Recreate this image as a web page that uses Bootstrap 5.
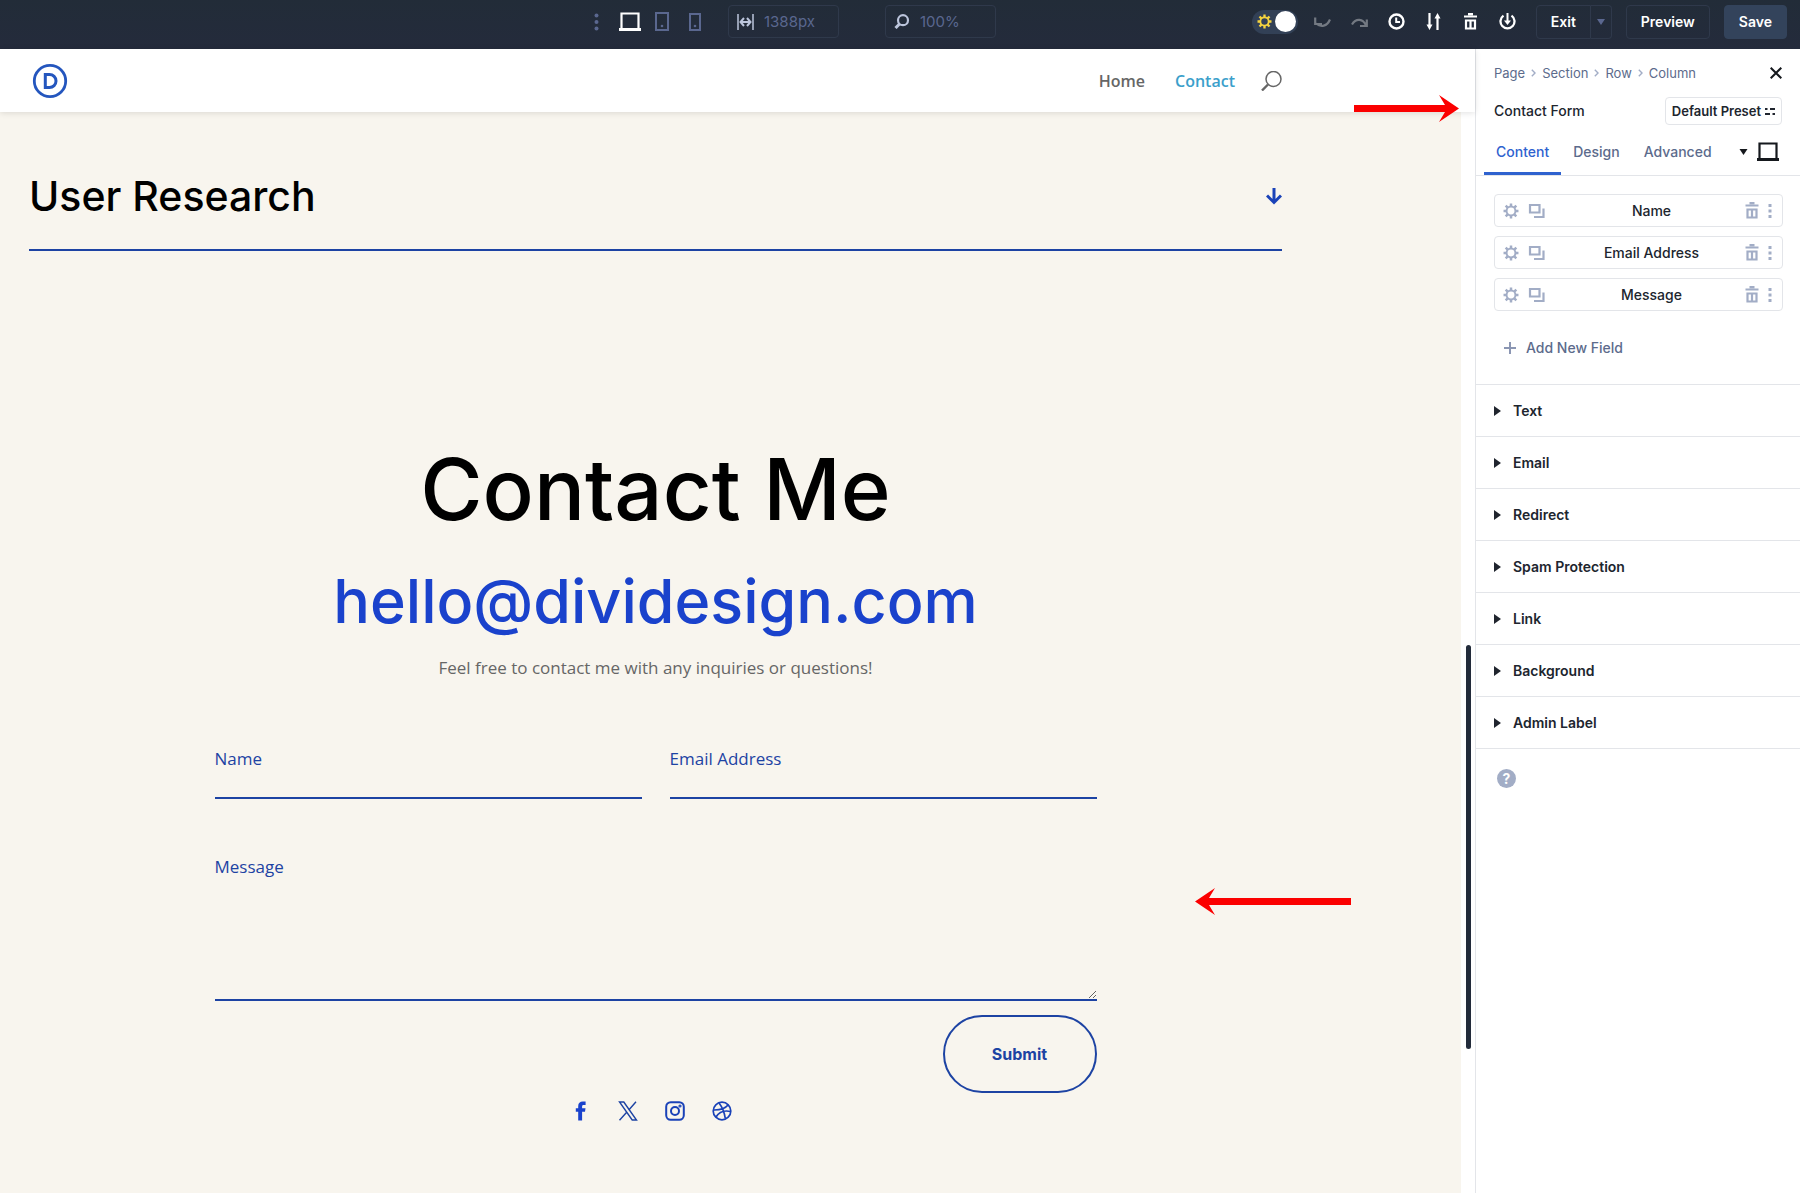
<!DOCTYPE html>
<html lang="en">
<head>
<meta charset="utf-8">
<meta name="viewport" content="width=device-width, initial-scale=1">
<title>Contact – Visual Builder</title>
<link href="https://cdn.jsdelivr.net/npm/bootstrap@5.3.0/dist/css/bootstrap.min.css" rel="stylesheet">
<style>
  :root { --ink:#222b3a; --slate:#5c6b8c; --pale:#a2adc6; --blue:#1d43a3; --royal:#1a42cc; --cream:#f8f5ee; --rule:#e3e5e9; }
  body { font-family:Inter, sans-serif; font-size:14px; line-height:20px; color:#20252e; background:#fff; }
  svg { display:block; flex:none; }
  a { text-decoration:none; }
  .icon-btn { display:block; border:0; background:none; padding:0; color:inherit; }

  /* builder bar */
  .builder-bar { background:linear-gradient(#222c38,#242b3c); height:49px; padding:0 13px 6px 33%; color:#fff; }
  .muted-ic { color:#5a678f; }
  .devices { gap:20px; margin-right:27px; }
  .device-pair { gap:14px; }
  .size-box { width:111px; height:33px; border:1px solid #2f394b; border-radius:4px; padding:0 8px; gap:10px; color:#bcc5dc; }
  .size-box input { width:100%; min-width:0; border:0; padding:0; background:none; color:#5a678f; font-size:15px; }
  .zoom-box { margin-left:46px; }
  .tools { gap:20px; }
  .tool-actions { gap:14px; }
  .theme-switch { width:46px; height:24px; border-radius:12px; background:#324056; padding:0 2px 0 5px; color:#f5d33f; margin-right:-4px; }
  .knob { width:21px; height:21px; border-radius:50%; background:#fff; }
  .faded { color:#737982; }
  .bar-btn { height:34px; border:1px solid #2f394b; border-radius:4px; background:none; color:#fff; font-weight:600; padding:0 14px; }
  .bar-btn.save { background:#33435b; border-color:#33435b; }
  .bar-btn.split { padding:0 6px; color:#5a678f; }

  /* site preview */
  .stage { min-width:0; }
  .site-head { height:63px; padding:0 193px 0 32px; background:#fff; box-shadow:0 1px 6px rgba(0,0,0,.12); z-index:1; font-family:"Open Sans", sans-serif; font-size:16px; font-weight:600; }
  .site-links { gap:30px; margin-right:26px; }
  .site-head a { color:#666; }
  .site-head a.current { color:#3b9fcb; }
  .search-ic { color:#666; }
  .site-page { background:var(--cream); padding:59px 179px 0 29px; margin-right:14px; color:var(--blue); }
  .fold { border-bottom:2px solid var(--blue); padding-bottom:28px; }
  .fold h2 { font-size:41px; line-height:50px; font-weight:500; color:#000; margin:0; }
  .contact-block { width:882px; max-width:100%; padding-top:189px; }
  .contact-block h1 { font-size:85px; line-height:100px; font-weight:500; color:#000; margin:0; }
  .mail { display:block; font-size:61px; line-height:80px; font-weight:500; color:var(--royal); margin-top:21px; }
  .intro { font-family:"Open Sans", sans-serif; font-size:17px; line-height:28px; color:#666; margin:13px 0 0; }
  .contact-form { margin-top:63px; font-family:"Open Sans", sans-serif; font-size:17px; line-height:28px; }
  .form-pair { gap:28px; }
  .contact-form label { display:block; }
  .contact-form input, .contact-form textarea { display:block; width:100%; border:0; border-bottom:2px solid var(--blue); border-radius:0; background:none; padding:0; outline:0; }
  .contact-form input { height:26px; }
  .contact-form textarea { height:120px; resize:vertical; }
  .message-field { margin-top:54px; }
  .submit-btn { width:154px; height:78px; border:2px solid var(--blue); border-radius:39px; background:none; color:var(--blue); font:700 16px/24px Inter, sans-serif; margin-top:14px; }
  .social { gap:27px; margin-top:8px; padding-right:9px; }
  .scroll-thumb { right:4px; top:596px; width:5px; height:404px; border-radius:3px; background:var(--ink); }
  .pointer-a { left:1354px; top:46px; z-index:3; }
  .pointer-b { left:1195px; top:839px; z-index:3; }

  /* settings panel */
  .settings { width:325px; flex:none; border-left:1px solid var(--rule); }
  .pad { padding:0 18px; }
  .crumbs { font-size:13px; color:var(--slate); gap:6px; padding-top:14px; }
  .crumbs a { color:var(--slate); }
  .module-head { margin-top:14px; font-weight:500; }
  .preset { height:28px; border:1px solid var(--rule); border-radius:4px; background:none; font-size:13px; font-weight:600; padding:0 6px; gap:4px; color:#20252e; }
  .tabs { border-bottom:1px solid var(--rule); padding:0 21px 0 8px; margin-top:10px; }
  .tabs .tab { border:0; background:none; height:40px; padding:0 12px 6px; font-weight:500; color:var(--slate); }
  .tabs .on { color:#2f62cf; box-shadow:inset 0 -3px #2f62cf; }
  .view-btn { gap:9px; color:#15181d; padding-bottom:7px; }
  .fields { padding:18px 17px 0 18px; }
  .field-row { height:33px; border:1px solid var(--rule); border-radius:4px; padding:0 10px 0 8px; margin-bottom:9px; gap:9px; color:var(--pale); }
  .field-row span { color:#20252e; font-weight:500; padding-left:12px; }
  .add-field { border:0; background:none; padding:0 0 0 10px; margin:27px 0 26px; gap:10px; color:var(--slate); font-weight:500; }
  .group { display:flex; width:100%; height:52px; align-items:center; gap:12px; border:0; border-top:1px solid var(--rule); background:none; padding:0 18px; font-weight:600; color:#20252e; }
  .group-end { border-top:1px solid var(--rule); padding:20px 21px; }
  .help { width:19px; height:19px; border:0; border-radius:50%; background:var(--pale); color:#fff; font-weight:700; line-height:19px; padding:0; }
</style>
</head>
<body class="d-flex flex-column min-vh-100">

<svg width="0" height="0" class="position-absolute" aria-hidden="true">
  <symbol id="dots" viewBox="0 0 4 18"><g fill="currentColor"><circle cx="2" cy="2.500" r="2"/><circle cx="2" cy="9" r="2"/><circle cx="2" cy="15.500" r="2"/></g></symbol>
  <symbol id="kebab" viewBox="0 0 4 14"><path d="M.5 0h3v3h-3zM.5 5.500h3v3h-3zM.5 11h3v3h-3z" fill="currentColor"/></symbol>
  <symbol id="laptop" viewBox="0 0 22 19"><path d="M2.500 17V1.500h17V17" fill="none" stroke="currentColor" stroke-width="2.200"/><path d="M0 16h22v3H0z" fill="currentColor"/></symbol>
  <symbol id="gear" viewBox="0 0 18 18"><circle cx="9" cy="9" r="5" fill="none" stroke="currentColor" stroke-width="2.200"/><path d="M9 .6v3M9 14.400v3M.6 9h3M14.400 9h3M3 3l2.300 2.300M12.700 12.700L15 15M3 15l2.300-2.300M12.700 5.300L15 3" stroke="currentColor" stroke-width="2.800"/></symbol>
  <symbol id="copy" viewBox="0 0 18 16"><path d="M2 2h9.500v7.500H2zM15.500 5.500V14H6" fill="none" stroke="currentColor" stroke-width="2.200"/></symbol>
  <symbol id="bin" viewBox="0 0 14 17"><path d="M.5 3.500h13M4.500 1.200h5" stroke="currentColor" stroke-width="2.200"/><path d="M2.500 7.500h9v8h-9zM7 7.500v8" fill="none" stroke="currentColor" stroke-width="2.200"/></symbol>
  <symbol id="tri" viewBox="0 0 7 10"><path d="M0 0l7 5-7 5z" fill="currentColor"/></symbol>
  <symbol id="down" viewBox="0 0 8 6"><path d="M0 0h8L4 6z" fill="currentColor"/></symbol>
  <symbol id="chev" viewBox="0 0 5 8"><path d="M.8.8L4 4 .8 7.200" fill="none" stroke="#a2adc6" stroke-width="1.400"/></symbol>
</svg>

<header class="builder-bar d-flex align-items-center">
  <div class="d-flex align-items-center">
    <div class="devices d-flex align-items-center">
      <button class="icon-btn muted-ic" aria-label="More"><svg width="5" height="18"><use href="#dots"/></svg></button>
      <div class="device-pair d-flex align-items-center">
        <button class="icon-btn" aria-label="Desktop"><svg width="22" height="19"><use href="#laptop"/></svg></button>
        <button class="icon-btn muted-ic" aria-label="Tablet"><svg width="14" height="19" viewBox="0 0 14 19"><path d="M1 1h12v17H1z" fill="none" stroke="currentColor" stroke-width="2"/><circle cx="7" cy="14" r="1.300" fill="currentColor"/></svg></button>
      </div>
      <button class="icon-btn muted-ic" aria-label="Phone"><svg width="12" height="18" viewBox="0 0 12 18"><path d="M1 1h10v16H1z" fill="none" stroke="currentColor" stroke-width="2"/><circle cx="6" cy="13" r="1.300" fill="currentColor"/></svg></button>
    </div>
    <div class="size-box d-flex align-items-center">
      <svg width="17" height="16" viewBox="0 0 17 16"><path d="M1 0v16M16 0v16" stroke="currentColor" stroke-width="1.500"/><path d="M4 8h9M7 4L3.500 8 7 12M10 4l3.500 4L10 12" fill="none" stroke="currentColor" stroke-width="2"/></svg>
      <input type="text" value="1388px" aria-label="Canvas width">
    </div>
    <div class="size-box zoom-box d-flex align-items-center">
      <svg width="16" height="15" viewBox="0 0 15 15"><circle cx="8.500" cy="6.200" r="5" fill="none" stroke="currentColor" stroke-width="2.200"/><path d="M5 10l-4 4" stroke="currentColor" stroke-width="3"/></svg>
      <input type="text" value="100%" aria-label="Zoom">
    </div>
  </div>
  <div class="tools d-flex align-items-center ms-auto">
    <button class="icon-btn theme-switch d-flex align-items-center justify-content-between" aria-label="Light mode"><svg width="15" height="15"><use href="#gear"/></svg><span class="knob"></span></button>
    <button class="icon-btn faded" aria-label="Undo"><svg width="17" height="12" viewBox="0 0 17 12"><path d="M1.200 1.500V8H8M2 7.500c5 4 11 3 14-4" fill="none" stroke="currentColor" stroke-width="2.200"/></svg></button>
    <button class="icon-btn faded" aria-label="Redo"><svg width="17" height="12" viewBox="0 0 17 12"><path d="M15.800 3.500V10H9M15 9.500C12 2.500 5 2 1 8.500" fill="none" stroke="currentColor" stroke-width="2.200"/></svg></button>
    <button class="icon-btn" aria-label="History"><svg width="17" height="17" viewBox="0 0 17 17"><circle cx="8.500" cy="8.500" r="7" fill="none" stroke="currentColor" stroke-width="2.400"/><path d="M8.200 4.500v4.600H12" fill="none" stroke="currentColor" stroke-width="2"/></svg></button>
    <button class="icon-btn" aria-label="Portability"><svg width="17" height="17" viewBox="0 0 17 17"><path d="M4.500 0v13M12.500 17V4" stroke="currentColor" stroke-width="2.200"/><path d="M1.500 11.500h6L4.500 17zM9.500 5.500h6L12.500 0z" fill="currentColor"/></svg></button>
    <button class="icon-btn" aria-label="Clear layout"><svg width="17" height="17"><use href="#bin"/></svg></button>
    <button class="icon-btn" aria-label="Page settings"><svg width="17" height="17" viewBox="0 0 17 17"><path d="M4.500 2.600a7 7 0 1 0 8 0" fill="none" stroke="currentColor" stroke-width="2.300"/><path d="M8.500 0v9" stroke="currentColor" stroke-width="2"/><path d="M5 7.500h7L8.500 12z" fill="currentColor"/></svg></button>
    <div class="tool-actions d-flex me-0">
      <div class="d-flex">
        <button class="bar-btn rounded-end-0">Exit</button><button class="bar-btn split rounded-start-0 border-start-0" aria-label="Exit options"><svg width="8" height="6"><use href="#down"/></svg></button>
      </div>
      <button class="bar-btn">Preview</button>
      <button class="bar-btn save">Save</button>
    </div>
  </div>
</header>

<div class="d-flex flex-grow-1">
  <main class="stage flex-grow-1 d-flex flex-column position-relative">
    <nav class="site-head d-flex align-items-center position-relative">
      <a href="#" aria-label="Divi"><svg width="36" height="36" viewBox="0 0 36 36" fill="none" stroke="#2456be"><circle cx="18" cy="18" r="15.700" stroke-width="2.800"/><path d="M13.300 11.500h4.200a6.500 6.500 0 0 1 0 13h-4.200z" stroke-width="3"/></svg></a>
      <div class="site-links d-flex ms-auto">
        <a href="#">Home</a>
        <a href="#" class="current">Contact</a>
      </div>
      <button class="icon-btn search-ic" aria-label="Search"><svg width="21" height="20" viewBox="0 0 21 20" fill="none" stroke="currentColor"><circle cx="12.500" cy="8" r="7.500" stroke-width="1.500"/><path d="M7 13.500l-6 6" stroke-width="2.400"/></svg></button>
    </nav>

    <div class="site-page flex-grow-1">
      <section class="fold d-flex justify-content-between align-items-center">
        <h2>User Research</h2>
        <svg width="16" height="17" viewBox="0 0 16 17" fill="none" stroke="#1a42b8" stroke-width="3"><path d="M8 0v14M1 7.500l7 7 7-7"/></svg>
      </section>
      <section class="contact-block mx-auto text-center">
        <h1>Contact Me</h1>
        <a href="#" class="mail">hello@dividesign.com</a>
        <p class="intro">Feel free to contact me with any inquiries or questions!</p>
        <form class="contact-form text-start">
          <div class="form-pair d-flex">
            <div class="flex-fill"><label for="f-name">Name</label><input id="f-name" type="text"></div>
            <div class="flex-fill"><label for="f-mail">Email Address</label><input id="f-mail" type="email"></div>
          </div>
          <div class="message-field"><label for="f-msg">Message</label><textarea id="f-msg"></textarea></div>
          <div class="d-flex justify-content-end"><button type="button" class="submit-btn">Submit</button></div>
        </form>
        <div class="social d-flex justify-content-center">
          <a href="#" aria-label="Facebook"><svg width="20" height="20" viewBox="0 0 20 20"><path d="M7.200 19.500v-8.800H4.800V7.300h2.400V5.200C7.200 2 9 .5 11.800.5h2.800v3.400h-1.900c-1.300 0-1.600.6-1.600 1.600v1.800h3.400l-.5 3.400h-2.900v8.800z" fill="#1a42cc"/></svg></a>
          <a href="#" aria-label="X"><svg width="20" height="20" viewBox="0 0 20 20" fill="none" stroke="#1d43a3" stroke-width="1.400"><path d="M1.500 1h4.300l12.700 18h-4.300zM18 .8l-7.400 8.500M8.900 11L1.500 19.300"/></svg></a>
          <a href="#" aria-label="Instagram"><svg width="20" height="20" viewBox="0 0 20 20" fill="none" stroke="#1a42b8" stroke-width="2"><rect x="1.200" y="1.200" width="17.600" height="17.600" rx="4.500"/><circle cx="10" cy="10" r="4"/><circle cx="15" cy="5" r=".6"/></svg></a>
          <a href="#" aria-label="Dribbble"><svg width="20" height="20" viewBox="0 0 20 20" fill="none" stroke="#1a42b8" stroke-width="1.700"><circle cx="10" cy="10" r="8.800"/><path d="M7 2c4 5 5.500 10 6.300 15.500M1.300 9c7 .2 12-1.500 15-5.200M4 16c3-5 8-7 14.700-5.500"/></svg></a>
        </div>
      </section>
    </div>
    <span class="scroll-thumb position-absolute"></span>
    <svg class="pointer-a position-absolute" width="105" height="27" viewBox="0 0 105 27"><path d="M0 10h91L85 0l20 13.500L85 27l6-10H0z" fill="#fb0000"/></svg>
    <svg class="pointer-b position-absolute" width="156" height="27" viewBox="0 0 156 27"><path d="M156 10H14l6-10L0 13.500 20 27l-6-10h142z" fill="#fb0000"/></svg>
  </main>

  <aside class="settings">
    <div class="pad crumbs d-flex align-items-center">
      <a href="#">Page</a><svg width="5" height="8"><use href="#chev"/></svg>
      <a href="#">Section</a><svg width="5" height="8"><use href="#chev"/></svg>
      <a href="#">Row</a><svg width="5" height="8"><use href="#chev"/></svg>
      <a href="#">Column</a>
      <button class="icon-btn ms-auto" aria-label="Close"><svg width="12" height="12" viewBox="0 0 12 12" stroke="#15181d" stroke-width="2"><path d="M.7.7l10.600 10.600M11.300.7L.7 11.300"/></svg></button>
    </div>
    <div class="pad module-head d-flex align-items-center justify-content-between">
      <span>Contact Form</span>
      <button class="preset d-flex align-items-center">Default Preset <svg width="10" height="9" viewBox="0 0 10 9" stroke="#20252e" stroke-width="2"><path d="M0 2h2.500M5 2h5M0 7h5M7.500 7H10"/></svg></button>
    </div>
    <div class="tabs d-flex align-items-center">
      <button class="tab on">Content</button><button class="tab">Design</button><button class="tab">Advanced</button>
      <button class="icon-btn view-btn ms-auto d-flex align-items-center" aria-label="Device view"><svg width="9" height="6"><use href="#down"/></svg><svg width="22" height="19"><use href="#laptop"/></svg></button>
    </div>
    <div class="fields">
      <div class="field-row d-flex align-items-center"><button class="icon-btn" aria-label="Settings"><svg width="16" height="16"><use href="#gear"/></svg></button><button class="icon-btn" aria-label="Duplicate"><svg width="18" height="16"><use href="#copy"/></svg></button><span class="flex-grow-1 text-center">Name</span><button class="icon-btn" aria-label="Delete"><svg width="14" height="17"><use href="#bin"/></svg></button><button class="icon-btn" aria-label="More"><svg width="4" height="14"><use href="#kebab"/></svg></button></div>
      <div class="field-row d-flex align-items-center"><button class="icon-btn" aria-label="Settings"><svg width="16" height="16"><use href="#gear"/></svg></button><button class="icon-btn" aria-label="Duplicate"><svg width="18" height="16"><use href="#copy"/></svg></button><span class="flex-grow-1 text-center">Email Address</span><button class="icon-btn" aria-label="Delete"><svg width="14" height="17"><use href="#bin"/></svg></button><button class="icon-btn" aria-label="More"><svg width="4" height="14"><use href="#kebab"/></svg></button></div>
      <div class="field-row d-flex align-items-center"><button class="icon-btn" aria-label="Settings"><svg width="16" height="16"><use href="#gear"/></svg></button><button class="icon-btn" aria-label="Duplicate"><svg width="18" height="16"><use href="#copy"/></svg></button><span class="flex-grow-1 text-center">Message</span><button class="icon-btn" aria-label="Delete"><svg width="14" height="17"><use href="#bin"/></svg></button><button class="icon-btn" aria-label="More"><svg width="4" height="14"><use href="#kebab"/></svg></button></div>
      <button class="add-field d-flex align-items-center"><svg width="12" height="12" viewBox="0 0 12 12" stroke="#8b96b3" stroke-width="2"><path d="M6 0v12M0 6h12"/></svg>Add New Field</button>
    </div>
    <button class="group"><svg width="7" height="10"><use href="#tri"/></svg>Text</button>
    <button class="group"><svg width="7" height="10"><use href="#tri"/></svg>Email</button>
    <button class="group"><svg width="7" height="10"><use href="#tri"/></svg>Redirect</button>
    <button class="group"><svg width="7" height="10"><use href="#tri"/></svg>Spam Protection</button>
    <button class="group"><svg width="7" height="10"><use href="#tri"/></svg>Link</button>
    <button class="group"><svg width="7" height="10"><use href="#tri"/></svg>Background</button>
    <button class="group"><svg width="7" height="10"><use href="#tri"/></svg>Admin Label</button>
    <div class="group-end"><button class="help" aria-label="Help">?</button></div>
  </aside>
</div>
<script src="https://cdn.jsdelivr.net/npm/bootstrap@5.3.0/dist/js/bootstrap.bundle.min.js"></script>
</body>
</html>
